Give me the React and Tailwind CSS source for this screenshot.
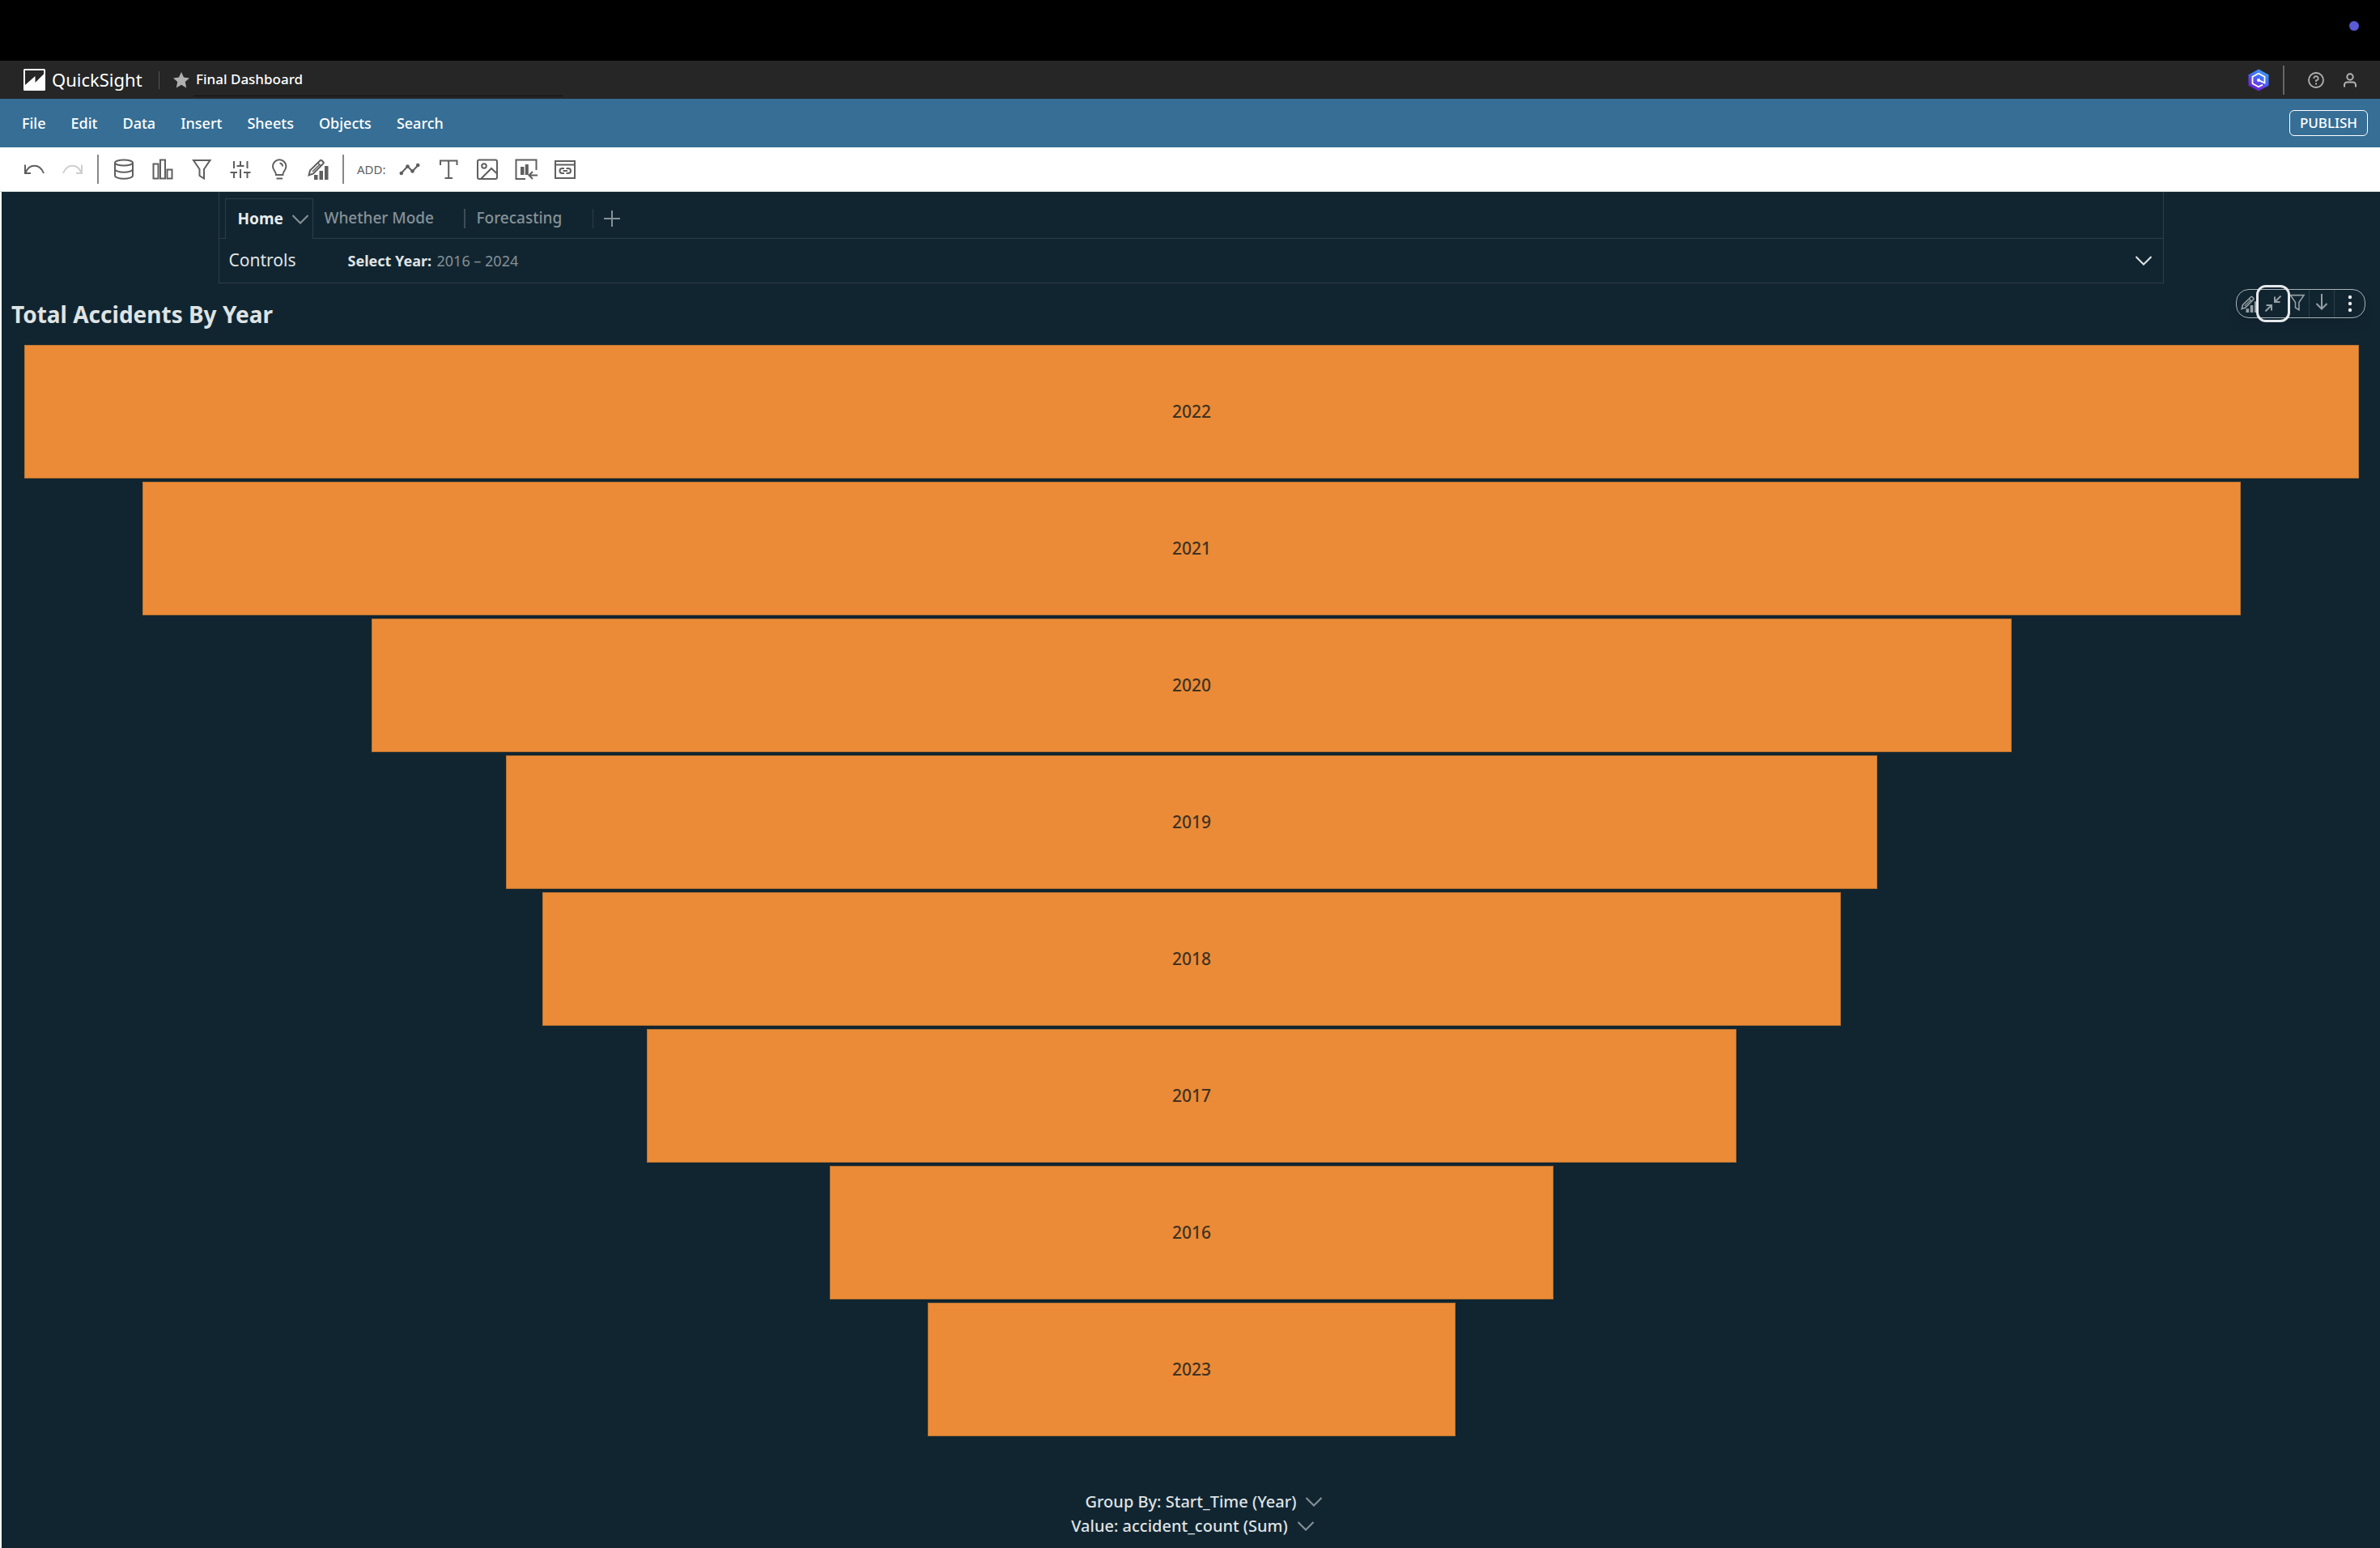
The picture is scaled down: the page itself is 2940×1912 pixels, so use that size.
import React from "react";

const bars = [
  { year: "2022", share: 2884 },
  { year: "2021", share: 2592 },
  { year: "2020", share: 2026 },
  { year: "2019", share: 1694 },
  { year: "2018", share: 1604 },
  { year: "2017", share: 1346 },
  { year: "2016", share: 894 },
  { year: "2023", share: 652 },
];

const menus = ["File", "Edit", "Data", "Insert", "Sheets", "Objects", "Search"];

function Svg({ children, size = "size-[26px]", box = 26, sw = 2 }) {
  return (
    <svg
      viewBox={`0 0 ${box} ${box}`}
      className={`${size} shrink-0`}
      fill="none"
      stroke="currentColor"
      strokeWidth={sw}
      aria-hidden="true"
    >
      {children}
    </svg>
  );
}

const Undo = () => (
  <Svg>
    <path d="M2 7.500V18H9" />
    <path d="M2.500 17.500C7 6 20 5.500 25 18" />
  </Svg>
);
const Redo = () => (
  <Svg>
    <path d="M24 7.500V18H17" />
    <path d="M23.500 17.500C19 6 6 5.500 1 18" />
  </Svg>
);
const Database = () => (
  <Svg>
    <ellipse cx="13" cy="5" rx="11" ry="3.500" />
    <path d="M2 5V21C2 23 7 24.800 13 24.800S24 23 24 21V5M2 13C2 15 7 16.800 13 16.800S24 15 24 13" />
  </Svg>
);
const Columns = () => (
  <Svg>
    <path d="M1.500 6.500H7.500V24.500H1.500ZM10 1.500H16V24.500H10ZM18.500 13.500H24.500V24.500H18.500Z" />
  </Svg>
);
const Funnel = () => (
  <Svg>
    <path d="M3 2H23.500L16 13V24.500L10.500 21V13Z" />
  </Svg>
);
const Sliders = () => (
  <Svg>
    <path d="M5 3V12M5 17V24M0.500 17H9M13 3V9M13 13V24M8.500 9H17.500M21.500 3V12M21.500 17V24M17 17H25.500" />
  </Svg>
);
const Bulb = () => (
  <Svg>
    <path d="M9 20C9 15.500 5 14.500 5 9.500A8.200 8.200 0 0 1 21.400 9.500C21.400 14.500 17.400 15.500 17.400 20Z" />
    <path d="M13.500 5.500A4 4 0 0 1 17 9.500M9.500 24.500H17" />
  </Svg>
);
const PencilChart = () => (
  <Svg>
    <path d="M1.500 20.500L3 14.500L15.500 2.200A1.500 1.500 0 0 1 17.500 2.200L19.300 4A1.500 1.500 0 0 1 19.300 6L7 18.500Z" />
    <path d="M12.500 5L16.500 9M6 16L15 7" strokeWidth="1.500" />
    <path
      fill="currentColor"
      stroke="none"
      d="M8 20H12.500V26H8ZM14.500 15H19V26H14.500ZM21 9H25.500V26H21Z"
    />
  </Svg>
);
const LineAdd = () => (
  <Svg>
    <path d="M2.500 18L10.500 9.500L16.500 15.500L23.500 8" />
    <g fill="currentColor" stroke="none">
      <circle cx="2.800" cy="18" r="2.300" />
      <circle cx="10.500" cy="9.500" r="2.300" />
      <circle cx="16.500" cy="15.500" r="2.300" />
      <circle cx="23.200" cy="8" r="2.300" />
    </g>
  </Svg>
);
const TextAdd = () => (
  <Svg>
    <path d="M3 8V2.500H23.500V8M13.200 2.500V24M8.500 24H18" />
  </Svg>
);
const ImageAdd = () => (
  <Svg>
    <rect x="1" y="1.500" width="24" height="23.500" rx="2" />
    <circle cx="9" cy="9" r="2.800" />
    <path d="M5.500 24.500L18 12L25 18.500" />
  </Svg>
);
const VisualAdd = () => (
  <Svg size="size-[28px]" box={28}>
    <path d="M13 26H1.500V2.500H26.500V15" />
    <path d="M7 11H11.500V21H7ZM12.800 8H16.800V21H12.800Z" fill="currentColor" stroke="none" />
    <path d="M28 21.500H18M22 17L17.500 21.500L22 26" />
  </Svg>
);
const LinkAdd = () => (
  <Svg>
    <rect x="1" y="3" width="24" height="21" />
    <path d="M1 7.500H25" />
    <path d="M12 12H9.500A3 3 0 0 0 9.500 18H12M14.500 12H17A3 3 0 0 1 17 18H14.500M10.500 15H16" />
  </Svg>
);
const Chevron = ({ sw = 2 }) => (
  <Svg size="size-5" box={20} sw={sw}>
    <path d="M0.500 5L10 14.500L19.500 5" />
  </Svg>
);

function Tool({ label, children, className = "" }) {
  return (
    <button type="button" aria-label={label} className={`flex w-7 items-center justify-center ${className}`}>
      {children}
    </button>
  );
}

function TopBar() {
  return (
    <header className="flex h-[47px] items-center bg-[#262626] text-white">
      <svg viewBox="0 0 27 27" className="ml-[29px] size-[27px]" aria-hidden="true">
        <rect width="27" height="27" rx="1.500" fill="#fff" />
        <path d="M2 2H25V6.500L14.500 17V9L2 20Z" fill="#262626" />
      </svg>
      <span className="ml-2 w-[115px] text-[22px] whitespace-nowrap">QuickSight</span>
      <span className="ml-[17px] h-[22px] w-px bg-[#555]" />
      <svg viewBox="0 0 20 20" className="ml-[17px] size-5" aria-hidden="true">
        <path
          fill="#b0b0b0"
          d="M10 0L13 6.600L20 7.400L14.800 12.100L16.200 19.500L10 15.800L3.800 19.500L5.200 12.100L0 7.400L7 6.600Z"
        />
      </svg>
      <div className="mt-2 ml-[5px] flex h-8 w-[456px] items-start border-b border-[#111] pl-[3px] text-[17px] leading-[22px] font-medium">
        Final Dashboard
      </div>
      <div className="ml-auto flex items-center">
        <button type="button" aria-label="Assistant">
          <svg viewBox="0 0 26 28" className="h-7 w-[26px]" aria-hidden="true">
            <defs>
              <linearGradient id="hex" x1="0.800" y1="0" x2="0.300" y2="1">
                <stop offset="0" stopColor="#3fa2f7" />
                <stop offset="0.450" stopColor="#4468f5" />
                <stop offset="0.750" stopColor="#6a35e6" />
                <stop offset="1" stopColor="#5b1fb8" />
              </linearGradient>
            </defs>
            <path d="M13 0.500L25.500 7.300V20.700L13 27.500L0.500 20.700V7.300Z" fill="url(#hex)" />
            <path
              d="M13 14L20.500 17.500V9.800L13 5.800L5.500 9.800V18.200L13 22.200L18 19.600"
              fill="none"
              stroke="#fff"
              strokeWidth="1.800"
            />
            <circle cx="13" cy="14" r="2" fill="#fff" />
          </svg>
        </button>
        <span className="ml-[17px] h-9 w-0.5 bg-[#666]" />
        <button type="button" aria-label="Help" className="ml-[29px] text-[#b3b3b3]">
          <Svg size="size-5" box={20}>
            <circle cx="10" cy="10" r="9" strokeWidth="1.800" />
            <path d="M7.300 8A2.700 2.700 0 1 1 10 10.500V12" strokeWidth="1.800" />
            <path d="M10 13.600V15.400" />
          </Svg>
        </button>
        <button type="button" aria-label="Account" className="mr-[27px] ml-[22px] text-[#b3b3b3]">
          <Svg size="size-5" box={20}>
            <circle cx="10" cy="6" r="3.700" />
            <path d="M3 18.500V16A3.500 3.500 0 0 1 6.500 12.500H13.500A3.500 3.500 0 0 1 17 16V18.500" />
          </Svg>
        </button>
      </div>
    </header>
  );
}

function Toolbar() {
  return (
    <div className="flex h-[55px] items-center border-b border-[#d5dbdb] bg-white pl-7 text-[#5f5f5f]">
      <div className="flex gap-5">
        <Tool label="Undo"><Undo /></Tool>
        <Tool label="Redo" className="text-[#cfcfcf]"><Redo /></Tool>
      </div>
      <span className="ml-4 h-9 w-0.5 bg-[#888]" />
      <div className="ml-[17px] flex gap-5">
        <Tool label="Data"><Database /></Tool>
        <Tool label="Visuals"><Columns /></Tool>
        <Tool label="Filter"><Funnel /></Tool>
        <Tool label="Parameters"><Sliders /></Tool>
        <Tool label="Insights"><Bulb /></Tool>
        <Tool label="Format"><PencilChart /></Tool>
      </div>
      <span className="ml-4 h-9 w-0.5 bg-[#888]" />
      <span className="ml-4 w-[37px] text-[15px] whitespace-nowrap">ADD:</span>
      <div className="ml-[14px] flex gap-5">
        <Tool label="Add visual"><LineAdd /></Tool>
        <Tool label="Add text"><TextAdd /></Tool>
        <Tool label="Add image"><ImageAdd /></Tool>
        <Tool label="Add existing visual"><VisualAdd /></Tool>
        <Tool label="Add embed"><LinkAdd /></Tool>
      </div>
    </div>
  );
}

function SheetPanel() {
  return (
    <section className="mx-auto flex h-[113px] w-[2403px] max-w-full flex-col border-x border-b border-[#2b3d49]">
      <div className="flex h-[58px] items-end text-[19px] text-[#879196]">
        <span className="w-[7px] shrink-0 self-stretch border-b border-[#2b3d49]" />
        <div className="flex h-[50px] w-[109px] shrink-0 items-center border-x border-t border-[#2b3d49] pl-[15px]">
          <button type="button" className="w-[67px] text-left font-bold text-[#e8ecec]">Home</button>
          <button type="button" aria-label="Sheet options"><Chevron /></button>
        </div>
        <div className="flex h-[50px] flex-1 items-center border-b border-[#2b3d49]">
          <button type="button" className="ml-[14px] w-[172px] text-left font-medium">Whether Mode</button>
          <span className="h-6 w-0.5 bg-[#3c4d58]" />
          <button type="button" className="ml-[14px] w-[143px] text-left font-medium">Forecasting</button>
          <span className="h-6 w-px bg-[#2b3d49]" />
          <button type="button" aria-label="Add sheet" className="ml-[13px]">
            <Svg size="size-5" box={20}><path d="M10 0V20M0 10H20" /></Svg>
          </button>
        </div>
      </div>
      <div className="flex flex-1 items-center pr-[14px] pl-3 text-[#e0e4e4]">
        <h2 className="w-[147px] text-[21px]">Controls</h2>
        <strong className="w-[106px] text-lg whitespace-nowrap">Select Year:</strong>
        <span className="ml-1 text-lg text-[#879196]">2016 – 2024</span>
        <button type="button" aria-label="Expand controls" className="ml-auto"><Chevron /></button>
      </div>
    </section>
  );
}

function VisualMenu() {
  return (
    <div className="mt-[7px] mr-[18px] flex h-9 w-40 items-center self-start rounded-2xl border border-[#aab3b7] text-[#969fa3] shadow-lg">
      <button type="button" aria-label="Format visual" className="ml-[5px] w-[19px] shrink-0 overflow-hidden [&>svg]:size-[21px]">
        <PencilChart />
      </button>
      <button
        type="button"
        aria-label="Minimize"
        className="z-10 -my-2 flex h-[46px] w-[42px] shrink-0 items-center justify-center rounded-xl border-3 border-[#e6e9ea]"
      >
        <Svg size="size-5" box={20}>
          <path d="M0.500 19.500L8 12M1.500 12H8V18.500M19.500 0.500L12 8M12 1.500V8H18.500" />
        </Svg>
      </button>
      <button type="button" aria-label="Filter" className="-ml-0.5 flex h-full w-[26px] shrink-0 items-center border-r border-[#2b3d49] pb-1 [&>svg]:size-[21px]">
        <Funnel />
      </button>
      <button type="button" aria-label="Sort" className="flex h-full w-[31px] shrink-0 items-center justify-center border-r border-[#2b3d49] pb-1">
        <Svg size="size-5" box={20}><path d="M10 0V18.500M3.500 12L10 18.500L16.500 12" /></Svg>
      </button>
      <button type="button" aria-label="More" className="flex flex-1 items-center justify-center text-[#e8ecec]">
        <svg viewBox="0 0 6 22" className="h-[22px] w-1.5" fill="currentColor" aria-hidden="true">
          <circle cx="3" cy="3" r="2.200" />
          <circle cx="3" cy="11" r="2.200" />
          <circle cx="3" cy="19" r="2.200" />
        </svg>
      </button>
    </div>
  );
}

export default function App() {
  return (
    <div className="flex min-h-screen flex-col bg-white font-['Noto_Sans',sans-serif]">
      <div className="flex h-[75px] justify-end bg-black pt-[26px] pr-[26px]">
        <span className="size-3 rounded-full bg-[#5a5bd6]" />
      </div>
      <TopBar />
      <nav className="flex h-15 items-center bg-[#366e95] pr-[15px] pl-[27px] text-lg font-medium text-white">
        <div className="flex flex-1 gap-[31px]">
          {menus.map((m) => (
            <button key={m} type="button">{m}</button>
          ))}
        </div>
        <button type="button" className="h-8 w-[97px] rounded-md border border-white text-[17px]">PUBLISH</button>
      </nav>
      <Toolbar />
      <main className="ml-0.5 flex flex-1 flex-col bg-[#112531]">
        <SheetPanel />
        <div className="flex items-center pl-3">
          <h1 className="mt-2 flex-1 text-[28px] leading-[60px] font-bold text-[#dfe3e3]">Total Accidents By Year</h1>
          <VisualMenu />
        </div>
        <div className="mt-2 mr-[26px] ml-7 flex flex-col gap-1">
          {bars.map((b) => (
            <div
              key={b.year}
              className="mx-auto flex h-[165px] items-center justify-center border border-[#b8732f] bg-[#eb8b37] text-[21px] font-medium text-[#3f3222]"
              style={{ width: `${(b.share / 2884) * 100}%` }}
            >
              {b.year}
            </div>
          ))}
        </div>
        <footer className="mt-[66px] flex flex-col items-center text-xl leading-[30px] font-medium text-[#dfe3e3]">
          <button type="button" className="flex items-center gap-3 pl-8">
            Group By: Start_Time (Year) <span className="text-[#879196]"><Chevron /></span>
          </button>
          <button type="button" className="flex items-center gap-3 pl-1">
            Value: accident_count (Sum) <span className="text-[#879196]"><Chevron /></span>
          </button>
        </footer>
      </main>
    </div>
  );
}
